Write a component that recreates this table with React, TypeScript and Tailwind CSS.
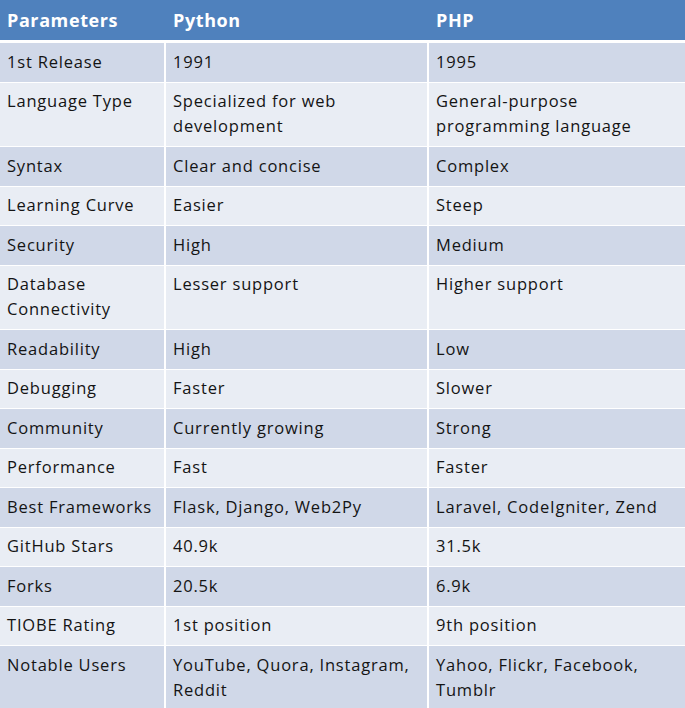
const ROWS: [string, string, string][] = [
  ['1st Release', '1991', '1995'],
  ['Language Type', 'Specialized for web development', 'General-purpose programming language'],
  ['Syntax', 'Clear and concise', 'Complex'],
  ['Learning Curve', 'Easier', 'Steep'],
  ['Security', 'High', 'Medium'],
  ['Database Connectivity', 'Lesser support', 'Higher support'],
  ['Readability', 'High', 'Low'],
  ['Debugging', 'Faster', 'Slower'],
  ['Community', 'Currently growing', 'Strong'],
  ['Performance', 'Fast', 'Faster'],
  ['Best Frameworks', 'Flask, Django, Web2Py', 'Laravel, CodeIgniter, Zend'],
  ['GitHub Stars', '40.9k', '31.5k'],
  ['Forks', '20.5k', '6.9k'],
  ['TIOBE Rating', '1st position', '9th position'],
  ['Notable Users', 'YouTube, Quora, Instagram, Reddit', 'Yahoo, Flickr, Facebook, Tumblr'],
]

export default function App() {
  return (
    <div className="w-[685px] bg-white font-['Open_Sans',sans-serif] text-[16.5px] tracking-[0.8px] text-[#141414]">
      <div className="grid grid-cols-[164px_261px_256px] gap-x-[2px] bg-[#4f81bd] text-[18px] font-bold tracking-[0.6px] text-white">
        {['Parameters', 'Python', 'PHP'].map(h => (
          <div key={h} className="h-[40px] bg-[#4f81bd] pl-[7px] leading-[40px]">
            {h}
          </div>
        ))}
      </div>
      <div className="mt-[3px] flex flex-col gap-y-[1px]">
        {ROWS.map((row, i) => (
          <div key={row[0]} className="grid grid-cols-[164px_261px_256px] gap-x-[2px]">
            {row.map((cell, j) => (
              <div
                key={j}
                className={`pt-[5.5px] pb-[8px] pl-[7px] pr-[6px] leading-[25px] ${i % 2 === 0 ? 'bg-[#d0d8e8]' : 'bg-[#e9edf4]'}`}
              >
                {cell}
              </div>
            ))}
          </div>
        ))}
      </div>
    </div>
  )
}
